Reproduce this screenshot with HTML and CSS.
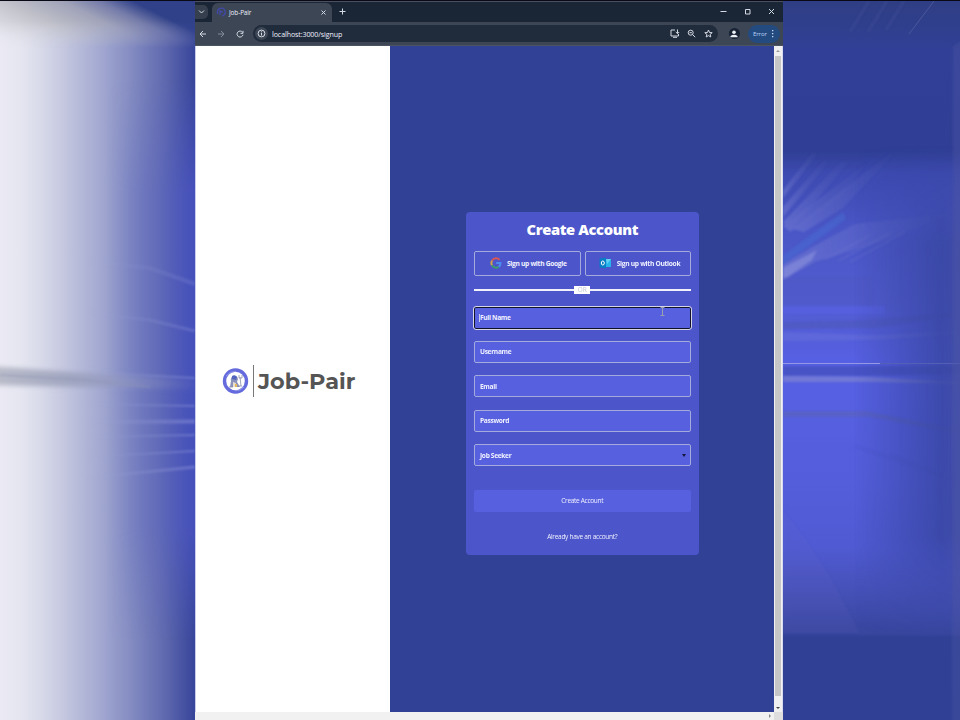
FILE: index.html
```html
<!DOCTYPE html>
<html lang="en">
<head>
<meta charset="utf-8">
<title>Job-Pair</title>
<link rel="stylesheet" href="styles.css">
</head>
<body>
<svg class="wallpaper" viewBox="0 0 960 720" aria-hidden="true">
  <defs>
    <linearGradient id="left"><stop offset="0" stop-color="#ebeaf4"/><stop offset=".1" stop-color="#e5e6f0"/><stop offset=".2" stop-color="#d9dbea"/><stop offset=".34" stop-color="#c2c5de"/><stop offset=".5" stop-color="#a5abd2"/><stop offset=".65" stop-color="#8890c4"/><stop offset=".85" stop-color="#5e68ae"/><stop offset="1" stop-color="#37459a"/></linearGradient>
    <linearGradient id="edge"><stop offset=".55" stop-color="#5660c8" stop-opacity="0"/><stop offset=".8" stop-color="#5c66c2" stop-opacity=".4"/><stop offset="1" stop-color="#4852c2" stop-opacity=".85"/></linearGradient>
    <linearGradient id="corner" x1="0" y1="46" x2="44" y2="-43" gradientUnits="userSpaceOnUse"><stop offset="0" stop-color="#d4d5dc" stop-opacity="0"/><stop offset=".2" stop-color="#d0d1d8" stop-opacity=".7"/><stop offset=".42" stop-color="#c0c1c9"/><stop offset=".68" stop-color="#a0a3b9"/><stop offset=".85" stop-color="#747ba9"/><stop offset="1" stop-color="#304189"/></linearGradient>
    <linearGradient id="cornerFade" x2="0" y2="1"><stop offset=".45" stop-color="#fff"/><stop offset="1" stop-color="#fff" stop-opacity="0"/></linearGradient>
    <mask id="cornerMask"><rect width="195" height="48" fill="url(#cornerFade)"/></mask>
    <linearGradient id="right" x2="0" y2="1"><stop offset="0" stop-color="#2f3e83"/><stop offset=".07" stop-color="#314096"/><stop offset=".21" stop-color="#303f95"/><stop offset=".24" stop-color="#3d4ab0"/><stop offset=".32" stop-color="#4a56c6"/><stop offset=".42" stop-color="#525ccf"/><stop offset=".5" stop-color="#5660e2"/><stop offset=".55" stop-color="#5660e2"/><stop offset=".67" stop-color="#545edb"/><stop offset=".76" stop-color="#505ad2"/><stop offset=".82" stop-color="#4651b8"/><stop offset=".88" stop-color="#38469e"/><stop offset=".885" stop-color="#304095"/><stop offset="1" stop-color="#304095"/></linearGradient>
    <linearGradient id="shade"><stop offset=".4" stop-color="#37459f" stop-opacity="0"/><stop offset=".9" stop-color="#37459f" stop-opacity=".95"/><stop offset="1" stop-color="#414ca2"/></linearGradient>
    <linearGradient id="fadeR"><stop offset="0" stop-color="#8c92dc"/><stop offset="1" stop-color="#6973bd" stop-opacity=".1"/></linearGradient>
    <linearGradient id="fadeL" x1="85" x2="195" y1="0" y2="0" gradientUnits="userSpaceOnUse"><stop offset="0" stop-color="#a4a9d2" stop-opacity="0"/><stop offset="1" stop-color="#7f88d4"/></linearGradient>
    <linearGradient id="streak"><stop offset="0" stop-color="#bbbdc9"/><stop offset=".4" stop-color="#a0a5c0"/><stop offset="1" stop-color="#7881bf" stop-opacity=".1"/></linearGradient>
    <linearGradient id="band" x2="0" y2="1"><stop offset="0" stop-color="#fff" stop-opacity="0"/><stop offset=".2" stop-color="#fff"/><stop offset=".8" stop-color="#fff"/><stop offset="1" stop-color="#fff" stop-opacity="0"/></linearGradient>
    <mask id="glow"><rect y="80" width="195" height="560" fill="url(#band)"/></mask>
    <mask id="rightGlow"><rect x="783" y="145" width="177" height="490" fill="url(#band)"/></mask>
    <filter id="b1" x="-20%" y="-100%" width="140%" height="300%"><feGaussianBlur stdDeviation="1"/></filter>
    <filter id="b2" filterUnits="userSpaceOnUse" x="-10" y="350" width="220" height="60"><feGaussianBlur stdDeviation="2.5"/></filter>
  </defs>
  <rect width="195" height="720" fill="url(#left)"/>
  <rect y="80" width="195" height="560" fill="url(#edge)" mask="url(#glow)"/>
  <rect width="195" height="48" fill="url(#corner)" mask="url(#cornerMask)"/>
  <path d="M-10 366L85 373 195 380V389L85 387 -10 385Z" fill="url(#streak)" filter="url(#b2)"/>
  <path d="M0 375L85 380 150 387" fill="none" stroke="#8e94b4" stroke-width="2" opacity=".4" filter="url(#b1)"/>
  <g stroke="url(#fadeL)" fill="none" filter="url(#b1)" opacity=".6">
    <path d="M90 262L150 268 195 284" stroke-width="4" opacity=".5"/>
    <path d="M90 313L150 320 195 331" stroke-width="3" opacity=".7"/>
    <path d="M85 372L195 378" stroke-width="2"/>
    <path d="M85 404L195 406" stroke-width="2"/>
    <path d="M85 422L195 421.5" stroke-width="4"/>
    <path d="M85 437L195 435" stroke-width="2"/>
    <path d="M85 457L195 451" stroke-width="2"/>
    <path d="M85 478L195 467" stroke-width="3"/>
  </g>
  <rect x="783" width="177" height="720" fill="url(#right)"/>
  <g filter="url(#b1)">
    <g fill="url(#fadeR)" opacity=".36">
      <path d="M783 190L813 152 818 154 783 198Z"/><path d="M783 207L824 160 829 162 783 217Z"/><path d="M783 222L842 161 850 161 790 231Z"/><path d="M792 229L889 154 894 154 843 208 804 232Z"/>
      <path d="M783 226L868 162 842 195 790 232Z"/>
    </g>
    <path d="M783 255L843 212 846 219 783 265Z" fill="#466cd1" opacity=".5"/>
    <path d="M783 265L812 247 855 224 960 212 880 242 815 262 783 280Z" fill="url(#fadeR)" opacity=".36"/>
    <path d="M825 260L870 235M838 261L890 233M850 262L905 232" stroke="#747dd0" stroke-width="2" opacity=".25"/>
    <path d="M783 268L817 250 812 260 783 280Z" fill="#858cda" opacity=".7"/>
    <path d="M783 277H874V306H783Z" fill="#4f59c4" opacity=".4"/>
    <path d="M783 306H885V314H783Z" fill="#5a61ea" opacity=".55"/>
    <path d="M783 322L865 320 960 312V315L875 328 783 329Z" fill="#5059bd" opacity=".7"/>
    <path d="M783 332L875 335 960 331V334L875 340 783 341Z" fill="#6a72da" opacity=".5"/>
    <path d="M783 511L807 541 829 575 860 633H783Z" fill="#6870c9" opacity=".1"/>
    <path d="M783 366H960V374L865 376H783Z" fill="#4450bb" opacity=".7"/>
    <path d="M783 376L870 377 960 382V384L870 382 783 382Z" fill="#7b82d2" opacity=".75"/>
    <path d="M783 411H867L960 430V434L870 417H783Z" fill="#5a63b9" opacity=".6"/>
    <path d="M855 446L960 482M890 455L960 482" stroke="#3d49a8" stroke-width="2" opacity=".15"/>
  </g>
  <rect x="783" y="145" width="177" height="490" fill="url(#shade)" opacity=".85" mask="url(#rightGlow)"/>
  <path d="M783 363.5H880" stroke="#9498e5"/>
  <path d="M880 363.5H960" stroke="#555fb5"/>
  <path d="M909 34L934 1" stroke="#5760a4" opacity=".7"/>
  <g filter="url(#b1)"><path d="M850 32L869 1M868 32L887 1M886 30L904 1" stroke="#46519b" stroke-width="3" opacity=".35"/>
  <path d="M953 46L963 40V722H952Z" fill="#4b55a2" opacity=".4"/></g>
  <rect width="960" height="1" fill="#080914"/>
</svg>
<main class="window">
  <header class="tabs">
    <span class="chevron"><svg width="7" height="6" viewBox="0 0 7 6"><path d="M1 1.5L3.5 4 6 1.5"/></svg></span>
    <div class="tab">
      <svg class="fav" width="10" height="10" viewBox="0 0 10 10"><path d="M2 7Q0 3 4 1.5T9 4 6 9M3 4l4 1M4 8V5"/></svg>
      <span class="tab-title">Job-Pair</span>
      <svg width="7" height="7" viewBox="0 0 7 7"><path d="M1.5 1.5l4 4M5.5 1.5l-4 4"/></svg>
    </div>
    <svg class="plus" width="7" height="7" viewBox="0 0 7 7"><path d="M3.5 .5v6M.5 3.5h6"/></svg>
    <div class="controls">
      <svg width="7" height="7" viewBox="0 0 7 7"><path d="M.5 3.5h6"/></svg>
      <svg width="7" height="7" viewBox="0 0 7 7"><path d="M1.5 1.5h4.5V6H1.5z"/></svg>
      <svg width="7" height="7" viewBox="0 0 7 7"><path d="M1 1l5 5M6 1L1 6"/></svg>
    </div>
  </header>
  <nav class="toolbar">
    <svg width="8" height="8" viewBox="0 0 8 8"><path d="M7 4H1M4 1L1 4l3 3"/></svg>
    <svg class="off" width="8" height="8" viewBox="0 0 8 8"><path d="M1 4h6M4 1l3 3-3 3"/></svg>
    <svg width="8" height="8" viewBox="0 0 8 8"><path d="M6.5 2.3A3 3 0 1 0 7 4.7M7 .8v2.5H4.5"/></svg>
    <div class="address">
      <span class="info"><svg width="9" height="9" viewBox="0 0 9 9"><circle cx="4.5" cy="4.5" r="3.4"/><path d="M4.5 4v2.5M4.5 2.3v1"/></svg></span>
      <span class="url">localhost:3000/signup</span>
      <svg width="10" height="9" viewBox="0 0 10 9"><path d="M5 1H1v6h7.5V5M3 8.3h4M7.5 .5v4M5.8 3l1.7 1.7L9.2 3"/></svg>
      <svg width="9" height="9" viewBox="0 0 9 9"><circle cx="3.7" cy="3.7" r="2.5"/><path d="M5.5 5.5L8.2 8.2M2.5 3.7h2.4"/></svg>
      <svg width="9" height="9" viewBox="0 0 9 9"><path d="M4.5 1l1 2.5 2.7.2-2.1 1.7.7 2.6-2.3-1.4L2.2 8l.7-2.6L.8 3.7l2.7-.2z"/></svg>
    </div>
    <span class="person"><svg width="8" height="8" viewBox="0 0 8 8"><circle cx="4" cy="2.3" r="1.8"/><path d="M.5 7.2V6Q4 3.5 7.5 6V7.2z"/></svg></span>
    <span class="error"><span>Error</span><svg width="3" height="9" viewBox="0 0 3 9"><path d="M1 1h1.3v1.3H1zM1 4h1.3v1.3H1zM1 7h1.3v1.3H1z"/></svg></span>
  </nav>
  <div class="viewport">
    <aside class="brand">
      <svg width="27" height="28" viewBox="0 0 27 28">
        <circle cx="13.5" cy="14" r="11" fill="#fff" stroke="#656bdc" stroke-width="3.4"/>
        <path d="M4 9Q8 4 14 4.3M22 20Q18 24 13 23.7" fill="none" stroke="#9ba0ec" stroke-width=".8"/>
        <path d="M8 20l1-6q-1-3 2-5 4-1 5 3l-1 3 3 5z" fill="#8b92bc"/>
        <path d="M10 9q3-2 5 1l-1 3-4-1z" fill="#5264bd"/>
        <path d="M11 15l3 1-1 4h-2z" fill="#e9dfd0"/><path d="M13 17h2v3h-2z" fill="#e8b95c"/>
        <path d="M18 10l1 9M17 8v3h3V8M7 20h4M16 19h4" fill="none" stroke="#8a8ea8" stroke-width=".8"/>
      </svg>
      <span class="rule"></span>
      <span class="wordmark">Job-Pair</span>
    </aside>
    <section class="page">
      <form class="card">
        <h1>Create Account</h1>
        <div class="social">
          <div class="provider"><svg width="12" height="12" viewBox="0 0 12 12" fill="none" stroke-width="2"><path d="M2 3.6A4.7 4.7 0 0 1 9.5 2.7" stroke="#d85657"/><path d="M2 3.6A5 5 0 0 0 2 8.3" stroke="#d3a04b"/><path d="M2 8.3A4.7 4.7 0 0 0 8.7 9.8" stroke="#3b9c70"/><path d="M8.7 9.8A4.5 4.5 0 0 0 10.5 6H6.2" stroke="#4c8cf0"/></svg><span>Sign up with Google</span></div>
          <div class="provider outlook"><svg width="13" height="12" viewBox="0 0 13 12"><path d="M6 2h6v8H6z" fill="#27b4eb"/><path d="M7 2h5L8 7z" fill="#63d2f6"/><path d="M.5 1.5L7 .8v10.4L.5 10.5z" fill="#087fc5"/><ellipse cx="3.8" cy="6" rx="1.5" ry="2" fill="none" stroke="#fff"/></svg><span>Sign up with Outlook</span></div>
        </div>
        <div class="or"><span>OR</span></div>
        <div class="field focused"><i class="caret"></i><span>Full Name</span>
          <svg class="ibeam" width="5" height="9" viewBox="0 0 5 9"><path d="M.5 .5h4M2.5 .5v8M.5 8.5h4"/></svg></div>
        <div class="field">Username</div>
        <div class="field">Email</div>
        <div class="field">Password</div>
        <div class="field select"><span>Job Seeker</span><i class="arrow"></i></div>
        <div class="submit">Create Account</div>
        <div class="login">Already have an account?</div>
      </form>
    </section>
    <div class="vscroll"><i class="up"></i><i class="thumb"></i><i class="down"></i></div>
  </div>
  <footer class="hscroll"><i></i><b></b></footer>
</main>
</body>
</html>
```
FILE: styles.css
```css
* { box-sizing: border-box; }
body { margin: 0; width: 960px; height: 720px; overflow: hidden; position: relative; font-family: "Open Sans", "Noto Sans", sans-serif; color: #f0f1ff; }
svg { display: block; flex: none; }
.wallpaper { position: absolute; inset: 0; width: 960px; height: 720px; z-index: -1; }
.window { margin-left: 195px; width: 588px; height: 720px; display: flex; flex-direction: column; border-top: 1px solid #080914; }
.tabs svg, .toolbar svg { fill: none; stroke: #d4dae4; stroke-width: 1; }
.tabs { height: 21px; background: #1a2636; display: flex; align-items: center; border-top: 1px solid #4a5060; padding-bottom: 1px; flex: none; }
.chevron { width: 13px; height: 14px; border-radius: 0 5px 5px 0; background: #353f4e; display: grid; place-items: center; }
.tab { width: 120px; height: 19px; margin: 1px 0 -1px 4px; padding: 0 5px 1px; display: flex; align-items: center; background: #3c4655; border-radius: 6px 6px 0 0; font-size: 6.4px; letter-spacing: -.1px; }
.tab .fav { stroke: #4149a4; stroke-width: 1.4; margin-left: -1px; margin-right: 3px; }
.tab-title { flex: 1; }
.plus { margin-left: 7px; }
.controls { margin-left: auto; display: flex; gap: 17px; padding-right: 8px; }
.toolbar { height: 24px; flex: none; background: #3c4655; display: flex; align-items: center; padding-left: 3.5px; gap: 10.5px; border-bottom: 1px solid #4b5460; }
.toolbar .off { stroke: #838c99; }
.address { flex: none; width: 465px; margin-left: -1px; height: 17px; display: flex; align-items: center; gap: 7.6px; border-radius: 9px; background: #202b3b; padding: 0 5px 0 2px; }
.info { width: 13px; height: 13px; border-radius: 50%; background: #3c4655; display: grid; place-items: center; }
.url { flex: 1; margin-left: -3.6px; font-size: 7.1px; letter-spacing: -.11px; }
.person { width: 11px; height: 11px; background: #172234; border-radius: 50%; display: grid; place-items: center; }
.toolbar .person svg { fill: #eceef4; stroke: none; }
.error { width: 32px; height: 18px; border-radius: 9px; background: #234b80; color: #bdd3fa; font-size: 6px; letter-spacing: -.1px; display: flex; align-items: center; gap: 4px; padding-left: 5px; margin-left: -2px; }
.toolbar .error svg { fill: #c6d8fa; stroke: none; }
.viewport { display: flex; flex: 1; min-height: 0; }
.brand { width: 195px; background: #fff; display: flex; align-items: center; padding: 3px 0 0 26px; border-left: 1px solid #c9ccec; }
.rule { width: 1px; height: 32px; margin: 0 4px 0 4px; background: #777; }
.wordmark { font: 700 22.4px/30px Montserrat, "Open Sans", sans-serif; color: #555; white-space: nowrap; }
.page { width: 384px; background: #304196; padding: 166px 0 0 76px; }
.card { width: 233px; height: 343px; border-radius: 4px; background: #4c55c9; padding: 8px 8px 0 7.5px; display: flex; flex-direction: column; }
h1 { margin: -1px 0 0; font-size: 14.7px; line-height: 20px; text-align: center; color: #fff; font-weight: 800; letter-spacing: -.36px; }
.social { display: flex; gap: 4px; margin-top: 11.5px; }
.provider { flex: 1 1 0; min-width: 0; height: 25px; border: 1px solid #a4aadc; border-radius: 2px; display: flex; align-items: center; padding-left: 15px; gap: 5.5px; font-size: 6.7px; font-weight: 700; letter-spacing: -.32px; white-space: nowrap; }
.provider.outlook { padding-left: 13px; gap: 4.5px; }
.or { height: 8px; margin-top: 10px; display: flex; align-items: center; color: #c4c5d6; font-size: 6.4px; line-height: 8px; }
.or::before, .or::after { content: ""; flex: 1; height: 2px; background: #f1f1fc; }
.or span { width: 16px; text-align: center; background: #fff; }
.field { height: 22px; margin-top: 12.4px; border: 1px solid #a4aadc; border-radius: 2px; background: #5760df; display: flex; align-items: center; padding: 0 4px 0 5.5px; font-size: 6.6px; font-weight: 700; letter-spacing: -.32px; flex: none; }
.field.focused { height: 24px; margin: 12px -1px 0; padding-left: 6.5px; position: relative; border-color: #d4d6e7; box-shadow: inset 0 0 0 1px #101329; border-radius: 3px; }
.focused + .field { margin-top: 11.4px; }
.caret { width: 1px; height: 8px; background: #c7cae8; margin-left: -1px; }
.ibeam { position: absolute; right: 26px; top: 0; fill: none; stroke: #9b9eaf; stroke-width: 1; }
.select { justify-content: space-between; }
.arrow { border: 2px solid transparent; border-top: 3px solid #15183c; border-bottom: 0; }
.submit { height: 22px; margin-top: 24px; background: #5760df; border-radius: 2px; text-align: center; font-size: 6.5px; letter-spacing: -.3px; line-height: 22px; }
.login { margin-top: 20px; text-align: center; font-size: 6.5px; letter-spacing: -.28px; line-height: 10px; }
.vscroll { width: 9px; background: #f0f0f0; border-right: 1px solid #d8daf0; display: flex; flex-direction: column; align-items: center; padding: 4px 0 3px; }
.up, .down { border: 2px solid transparent; }
.up { border-bottom: 2px solid #999; border-top: 0; }
.down { border-top: 2px solid #444; border-bottom: 0; }
.thumb { flex: 1; width: 6px; margin: 4px 0 11px; background: #c6c6c6; }
.hscroll { height: 8px; background: #f1f1f1; display: flex; align-items: center; justify-content: flex-end; flex: none; }
.hscroll i { border: 2px solid transparent; border-left-color: #888; border-right: 0; margin-right: 3px; }
.hscroll b { width: 9px; height: 8px; background: #dedede; }
```
